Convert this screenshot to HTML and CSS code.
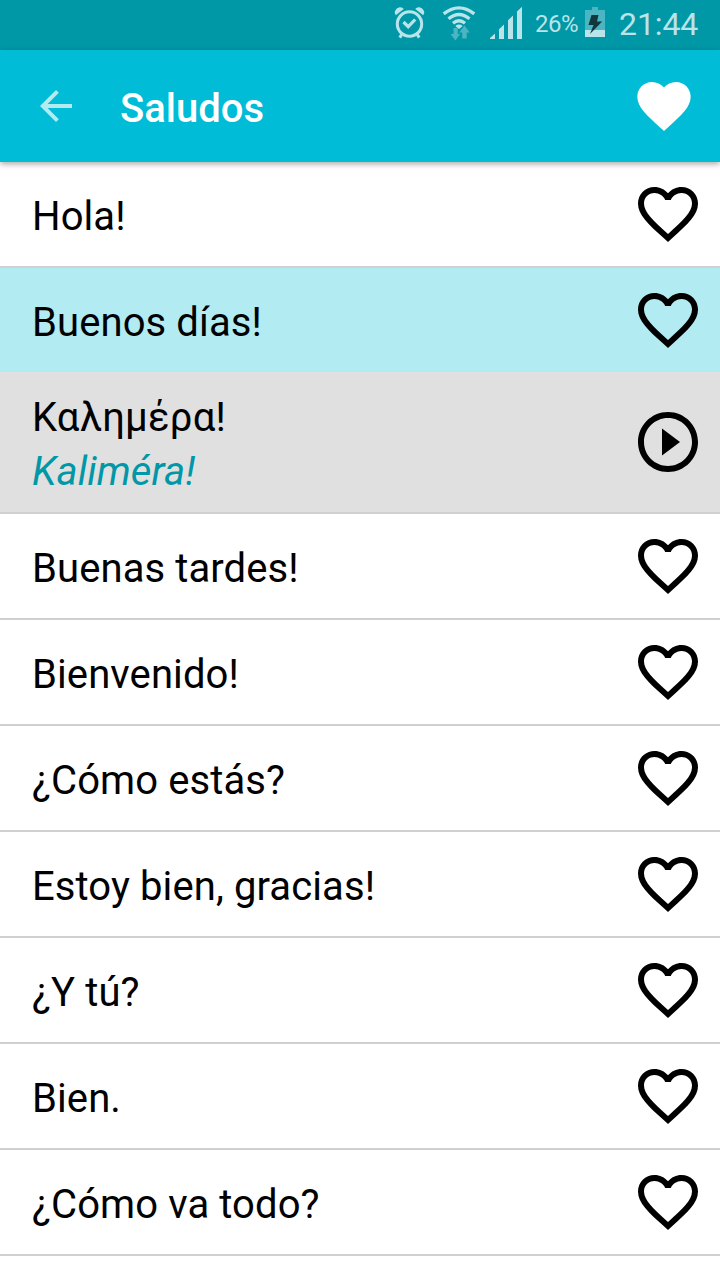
FILE: index.html
```html
<!DOCTYPE html>
<html lang="es">
<head>
<meta charset="utf-8">
<title>Saludos</title>
<link rel="stylesheet" href="styles.css">
</head>
<body>
<svg class="defs" width="0" height="0">
  <symbol id="heart" viewBox="0 0 24 24"><path d="M16.5 3c-1.74 0-3.41.81-4.5 2.09C10.91 3.81 9.24 3 7.5 3 4.42 3 2 5.42 2 8.5c0 3.78 3.4 6.86 8.55 11.54L12 21.35l1.45-1.32C18.6 15.36 22 12.28 22 8.5 22 5.42 19.58 3 16.5 3zm-4.4 15.55l-.1.1-.1-.1C7.14 14.24 4 11.39 4 8.5 4 6.5 5.5 5 7.5 5c1.54 0 3.04.99 3.57 2.36h1.87C13.46 5.99 14.96 5 16.5 5c2 0 3.5 1.5 3.5 3.5 0 2.89-3.14 5.74-7.9 10.05z"/></symbol>
</svg>
<header class="status">
  <svg class="status-icons" width="136" height="41" viewBox="390 0 136 41">
    <g fill="none" stroke="#b8e4ea">
      <circle cx="409.5" cy="24" r="12.2" stroke-width="3"/>
      <path d="M403.5 22l4.7 4.7 7-7.2" stroke-width="3.2"/>
      <path d="M402 34l-2.2 3.6M417 34l2.2 3.6" stroke-width="3"/>
      <path d="M443.7 13.9q15.3-12 30.6 0M448.5 18.8q10.5-8.6 21 0M453 23.3q6-5 12 0" stroke-width="3.3"/>
    </g>
    <path fill="#b8e4ea" d="M395.8 15.3q-1.8-1.8-.8-4.3 1.3-3 4.5-3.8 2.8-.4 4.3 1.8zM423.2 15.3q1.8-1.8.8-4.3-1.3-3-4.5-3.8-2.8-.4-4.3 1.8z"/>
    <path fill="#b8e4ea" d="M455.3 26q3.7-2.9 7.4 0L459 29z"/>
    <path fill="#4bb5c1" d="M453.5 28h4.3v6h2.3l-4.7 6.5-4.9-6.5h3zM462.2 38.5v-6h-2.9l5.2-7 5.2 7h-3v6z"/>
    <path fill="#b8e4ea" d="M490 39v-1l5-4.5V39zM499 39V29.3l5-4.8V39zM508 39V20.3l5-4.8V39zM517 39V11.5l5-4.8V39z"/>
  </svg>
  <span class="percent">26%</span>
  <svg class="battery" width="20" height="30" viewBox="0 0 20 30">
    <path fill="#4bb5c1" d="M0 3h7V0h6v3h7v20H0z"/>
    <path fill="#b8e4ea" d="M0 23h20v7H0z"/>
    <path fill="#10383d" d="M6.5 8h7L12 14.5h5.2L5 27l3.5-9H3.5z"/>
  </svg>
  <time class="clock">21:44</time>
</header>
<nav class="appbar">
  <svg class="back" viewBox="0 0 24 24"><path d="M20 11H7.83l5.59-5.59L12 4l-8 8 8 8 1.41-1.41L7.83 13H20v-2z"/></svg>
  <h1 class="title">Saludos</h1>
  <svg class="favorite" viewBox="0 0 24 24"><path d="M12 21.35l-1.45-1.32C5.4 15.36 2 12.28 2 8.5 2 5.42 4.42 3 7.5 3c1.74 0 3.41.81 4.5 2.09C13.09 3.81 14.76 3 16.5 3 19.58 3 22 5.42 22 8.5c0 3.78-3.4 6.86-8.55 11.54L12 21.35z"/></svg>
</nav>
<main class="list">
  <div class="row"><span>Hola!</span><svg class="icon"><use href="#heart"/></svg></div>
  <div class="row selected"><span>Buenos días!</span><svg class="icon"><use href="#heart"/></svg></div>
  <div class="row detail">
    <div class="translation"><span class="greek" lang="el">Καλημέρα!</span><em class="phonetic">Kaliméra!</em></div>
    <svg class="icon" viewBox="0 0 24 24"><path d="M10 16.5l6-4.5-6-4.5v9zM12 2C6.48 2 2 6.48 2 12s4.48 10 10 10 10-4.48 10-10S17.52 2 12 2zm0 18c-4.41 0-8-3.59-8-8s3.59-8 8-8 8 3.59 8 8-3.59 8-8 8z"/></svg>
  </div>
  <div class="row"><span>Buenas tardes!</span><svg class="icon"><use href="#heart"/></svg></div>
  <div class="row"><span>Bienvenido!</span><svg class="icon"><use href="#heart"/></svg></div>
  <div class="row"><span>¿Cómo estás?</span><svg class="icon"><use href="#heart"/></svg></div>
  <div class="row"><span>Estoy bien, gracias!</span><svg class="icon"><use href="#heart"/></svg></div>
  <div class="row"><span>¿Y tú?</span><svg class="icon"><use href="#heart"/></svg></div>
  <div class="row"><span>Bien.</span><svg class="icon"><use href="#heart"/></svg></div>
  <div class="row"><span>¿Cómo va todo?</span><svg class="icon"><use href="#heart"/></svg></div>
</main>
</body>
</html>
```
FILE: styles.css
```css
* { box-sizing: border-box; }
body {
  margin: 0;
  height: 1280px;
  overflow: hidden;
  background: #fff;
  color: #000;
  font-family: Roboto, "Noto Sans", sans-serif;
  font-size: 40px;
  line-height: 48px;
}
svg { display: block; flex: none; }
.defs { position: absolute; }
.status {
  display: flex;
  align-items: flex-start;
  height: 50px;
  padding-left: 390px;
  background: #0097a7;
  color: #b8e4ea;
}
.percent { width: 50px; margin-left: 9px; font-size: 24px; line-height: 48px; letter-spacing: -.5px; }
.battery { margin-top: 7px; }
.clock { margin-left: 14px; font-size: 32px; line-height: 48px; letter-spacing: -.1px; }
.appbar {
  position: relative;
  display: flex;
  align-items: center;
  height: 112px;
  padding: 0 24px 0 32px;
  background: #00bcd7;
  box-shadow: 0 2px 6px rgba(0, 0, 0, .35);
}
.back { width: 48px; height: 48px; fill: #b2ebf2; }
.title { flex: 1; margin: 6px 0 0 40px; color: #fff; font-size: 40px; font-weight: 500; }
.favorite { width: 64px; height: 64px; fill: #fff; }
.row {
  display: flex;
  align-items: center;
  justify-content: space-between;
  height: 106px;
  padding: 0 16px 0 32px;
  border-bottom: 2px solid #d0d0d0;
  letter-spacing: .1px;
}
.row > span { margin-top: 6px; }
.selected { height: 104px; border-bottom: 0; background: #b2ebf2; }
.detail { height: 142px; background: #e0e0e0; }
.icon { width: 72px; height: 72px; fill: #000; }
.translation { display: flex; flex-direction: column; gap: 6px; margin-top: 6px; }
.greek { letter-spacing: .2px; }
.phonetic { color: #0097a7; }
```
